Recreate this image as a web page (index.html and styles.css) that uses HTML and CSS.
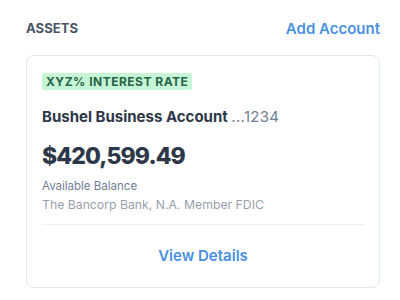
FILE: index.html
```html
<!DOCTYPE html>
<html>
<head>
<meta charset="utf-8">
<link rel="stylesheet" href="styles.css">
</head>
<body>
<div class="page">
  <div class="header">
    <span class="section-title">ASSETS</span>
    <a class="add-link">Add Account</a>
  </div>
  <div class="card">
    <div class="badge-row"><span class="badge">XYZ% INTEREST RATE</span></div>
    <div class="account-name">Bushel Business Account <span class="account-num">...1234</span></div>
    <div class="amount">$420,599.49</div>
    <div class="label">Available Balance</div>
    <div class="bank">The Bancorp Bank, N.A. Member FDIC</div>
    <div class="divider"></div>
    <div class="details"><a class="details-link">View Details</a></div>
  </div>
</div>
</body>
</html>
```
FILE: styles.css
```css
* { box-sizing: border-box; }
html, body { margin: 0; padding: 0; background: #ffffff; }
body { font-family: Inter, "Noto Sans", sans-serif; }
.page { padding: 18px 20px 0 26px; width: 400px; }
.header { display: flex; justify-content: space-between; align-items: center; height: 20px; }
.section-title { font-size: 13px; font-weight: 700; color: #4a5568; letter-spacing: 0.1px; }
.add-link { font-size: 15px; font-weight: 600; color: #4a90e2; }
.card { margin-top: 17px; border: 1px solid #e2e8f0; border-radius: 8px; padding: 16px 15px 0 15px; height: 233px; }
.badge-row { line-height: 17px; height: 17px; }
.badge { display: inline-block; background: #c6f6d5; color: #276749; font-size: 12px; font-weight: 700; letter-spacing: 0.5px; line-height: 17px; padding: 0 4px; border-radius: 2px; }
.account-name { margin-top: 18px; font-size: 15px; font-weight: 700; color: #2d3748; line-height: 20px; }
.account-num { font-weight: 400; color: #718096; letter-spacing: 0.3px; }
.amount { margin-top: 14px; font-size: 23px; font-weight: 800; color: #2d3748; line-height: 30px; letter-spacing: -0.9px; }
.label { margin-top: 7px; font-size: 11.5px; color: #718096; line-height: 16px; }
.bank { margin-top: 2px; font-size: 12.25px; color: #9aa1ac; line-height: 18px; }
.divider { margin-top: 10px; height: 1px; background: #edf2f7; }
.details { text-align: center; margin-top: 20px; line-height: 20px; }
.details-link { font-size: 15px; font-weight: 600; color: #4a90e2; }
```
